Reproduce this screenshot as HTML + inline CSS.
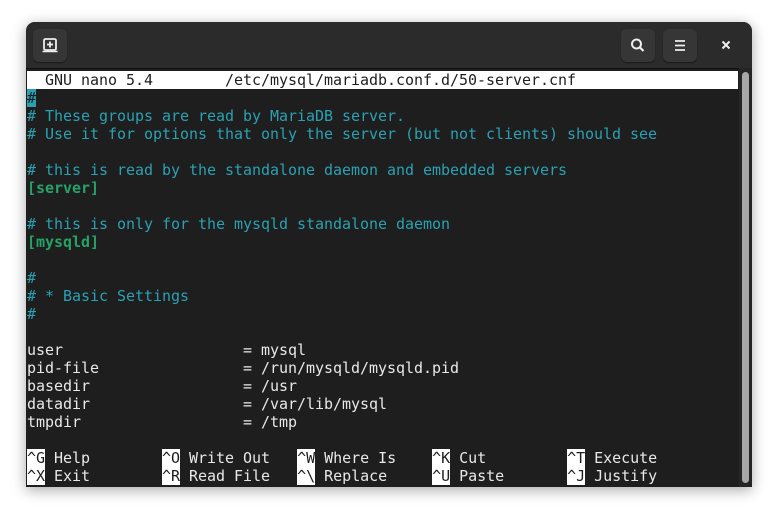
<!DOCTYPE html>
<html><head><meta charset="utf-8"><style>
html,body{margin:0;padding:0;background:#fff;width:777px;height:515px;overflow:hidden}
.win{position:absolute;left:26px;top:22px;width:726px;height:465px;background:#1e1e1e;border-radius:9px 9px 0 0;box-shadow:0 3px 14px rgba(0,0,0,.35);overflow:hidden}
.hdr{position:absolute;left:0;top:0;width:726px;height:46px;background:#2b2b2b;border-bottom:1px solid #111}
.btn{position:absolute;top:7px;width:34px;height:33px;background:#363636;border-radius:6px;box-shadow:0 1px 1px rgba(0,0,0,.4)}
.term{position:absolute;left:1px;top:49px;font-family:"DejaVu Sans Mono","Liberation Mono",monospace;font-size:15px;line-height:18px;color:#e8e8e8;letter-spacing:-0.03px}
.row{height:18px;white-space:pre}
.c{color:#2aa1b3}.g{color:#26a269;font-weight:bold}
.title{background:#fff;color:#1e1e1e;width:711px}
.k{background:#fff;color:#1e1e1e}
.sb{position:absolute;left:713px;top:46px;width:13px;height:419px;background:#252525}
.th{position:absolute;left:3px;top:4px;width:7px;height:411px;background:#a8a8a8;border-radius:4px}
</style></head><body>
<div class="win">
<div class="hdr">
 <div class="btn" style="left:7px"><svg width="34" height="33" viewBox="0 0 34 33"><rect x="11" y="10" width="12" height="11" rx="1.5" fill="none" stroke="#eee" stroke-width="1.8"/><path d="M17 12.5v6M14 15.5h6" stroke="#eee" stroke-width="1.8"/><path d="M9.5 22.5h15" stroke="#eee" stroke-width="1.6"/></svg></div>
 <div class="btn" style="left:595px"><svg width="34" height="33" viewBox="0 0 34 33"><circle cx="15.5" cy="15" r="4.5" fill="none" stroke="#eee" stroke-width="2"/><path d="M19 18.5l3.5 3.5" stroke="#eee" stroke-width="2.2"/></svg></div>
 <div class="btn" style="left:637px"><svg width="34" height="33" viewBox="0 0 34 33"><path d="M12 12h10M12 16.5h10M12 21h10" stroke="#eee" stroke-width="1.8"/></svg></div>
 <svg style="position:absolute;left:693px;top:16px" width="14" height="14" viewBox="0 0 14 14"><path d="M3.5 3.5l7 7M10.5 3.5l-7 7" stroke="#eee" stroke-width="2"/></svg>
</div>
<div class="term"><div class="row title">  GNU nano 5.4        /etc/mysql/mariadb.conf.d/50-server.cnf</div><div class="row"><span style="background:#2aa1b3;color:#1e1e1e">#</span></div><div class="row c"># These groups are read by MariaDB server.</div><div class="row c"># Use it for options that only the server (but not clients) should see</div><div class="row"> </div><div class="row c"># this is read by the standalone daemon and embedded servers</div><div class="row g">[server]</div><div class="row"> </div><div class="row c"># this is only for the mysqld standalone daemon</div><div class="row g">[mysqld]</div><div class="row"> </div><div class="row c">#</div><div class="row c"># * Basic Settings</div><div class="row c">#</div><div class="row"> </div><div class="row">user                    = mysql</div><div class="row">pid-file                = /run/mysqld/mysqld.pid</div><div class="row">basedir                 = /usr</div><div class="row">datadir                 = /var/lib/mysql</div><div class="row">tmpdir                  = /tmp</div><div class="row"> </div><div class="row"><span class="k">^G</span> Help        <span class="k">^O</span> Write Out   <span class="k">^W</span> Where Is    <span class="k">^K</span> Cut         <span class="k">^T</span> Execute</div><div class="row"><span class="k">^X</span> Exit        <span class="k">^R</span> Read File   <span class="k">^\</span> Replace     <span class="k">^U</span> Paste       <span class="k">^J</span> Justify</div></div>
<div class="sb"><div class="th"></div></div>
</div>
</body></html>
